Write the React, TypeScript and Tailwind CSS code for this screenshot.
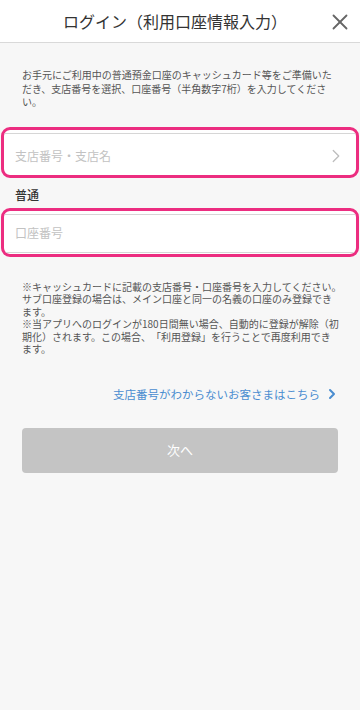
import { ChevronRight, X } from 'lucide-react';

const introLines = [
  'お手元にご利用中の普通預金口座のキャッシュカード等をご準備いた',
  'だき、支店番号を選択、口座番号（半角数字7桁）を入力してくださ',
  'い。',
];

const noteLines = [
  '※キャッシュカードに記載の支店番号・口座番号を入力してください。',
  'サブ口座登録の場合は、メイン口座と同一の名義の口座のみ登録でき',
  'ます。',
  '※当アプリへのログインが180日間無い場合、自動的に登録が解除（初',
  '期化）されます。この場合、「利用登録」を行うことで再度利用でき',
  'ます。',
];

const App = () => {
  return (
    <div
      className="min-h-[710px] bg-[#f7f7f7] [text-spacing-trim:space-all]"
      style={{ fontFamily: '"Noto Sans CJK JP", "Noto Sans", sans-serif' }}
    >
      {/* Header */}
      <header className="relative h-[43px] bg-white border-b border-[#d9d9d9] flex items-center justify-center">
        <h1 className="text-[16px] text-[#333333] pr-[10px] leading-none">ログイン（利用口座情報入力）</h1>
        <button className="absolute right-[7px] top-[9px] text-[#666666]">
          <X size={26} strokeWidth={1.7} />
        </button>
      </header>

      {/* Intro */}
      <p className="pt-[25px] pl-[22px] pr-[20px] text-[10px] leading-[13.5px] text-[#555555] whitespace-nowrap">
        {introLines.map((line, i) => (
          <span key={i}>
            {line}
            {i < introLines.length - 1 && <br />}
          </span>
        ))}
      </p>

      {/* Branch field */}
      <div className="mt-[18px] mx-[1px] h-[51px] border-[3px] border-[#ec2d80] rounded-[9px] bg-white overflow-hidden pt-[3px]">
        <div className="h-[41px] border-t border-[#d6d6d6] flex items-center justify-between pl-[11px] pr-[9px] pt-[4px]">
          <span className="text-[12px] text-[#c2c2c2]">支店番号・支店名</span>
          <ChevronRight size={22} strokeWidth={1.4} className="text-[#bdbdbd]" />
        </div>
      </div>

      {/* Label */}
      <div className="mt-[9px] pl-[15px] text-[12px] leading-[16px] text-[#333333] font-medium">普通</div>

      {/* Account field */}
      <div className="mt-[5px] mx-[1px] h-[49px] border-[3px] border-[#ec2d80] rounded-[9px] bg-white overflow-hidden pt-[3px]">
        <div className="h-[39px] border-t border-b border-[#d6d6d6] flex items-center pl-[11px]">
          <span className="text-[12px] text-[#c2c2c2]">口座番号</span>
        </div>
      </div>

      {/* Notes */}
      <p className="mt-[24px] pl-[22px] text-[10px] leading-[12.5px] text-[#555555] whitespace-nowrap">
        {noteLines.map((line, i) => (
          <span key={i}>
            {line}
            {i < noteLines.length - 1 && <br />}
          </span>
        ))}
      </p>

      {/* Link */}
      <div className="mt-[30px] flex items-center justify-end pr-[20px] text-[#4a8dd0]">
        <span className="text-[11.5px] leading-[16px]">支店番号がわからないお客さまはこちら</span>
        <ChevronRight size={16} strokeWidth={3} className="ml-[4px]" />
      </div>

      {/* Next button */}
      <div className="mt-[26px] px-[22px]">
        <button className="w-full h-[45px] rounded-[4px] bg-[#c4c4c4] text-white text-[13px]">次へ</button>
      </div>
    </div>
  );
};

export default App;
